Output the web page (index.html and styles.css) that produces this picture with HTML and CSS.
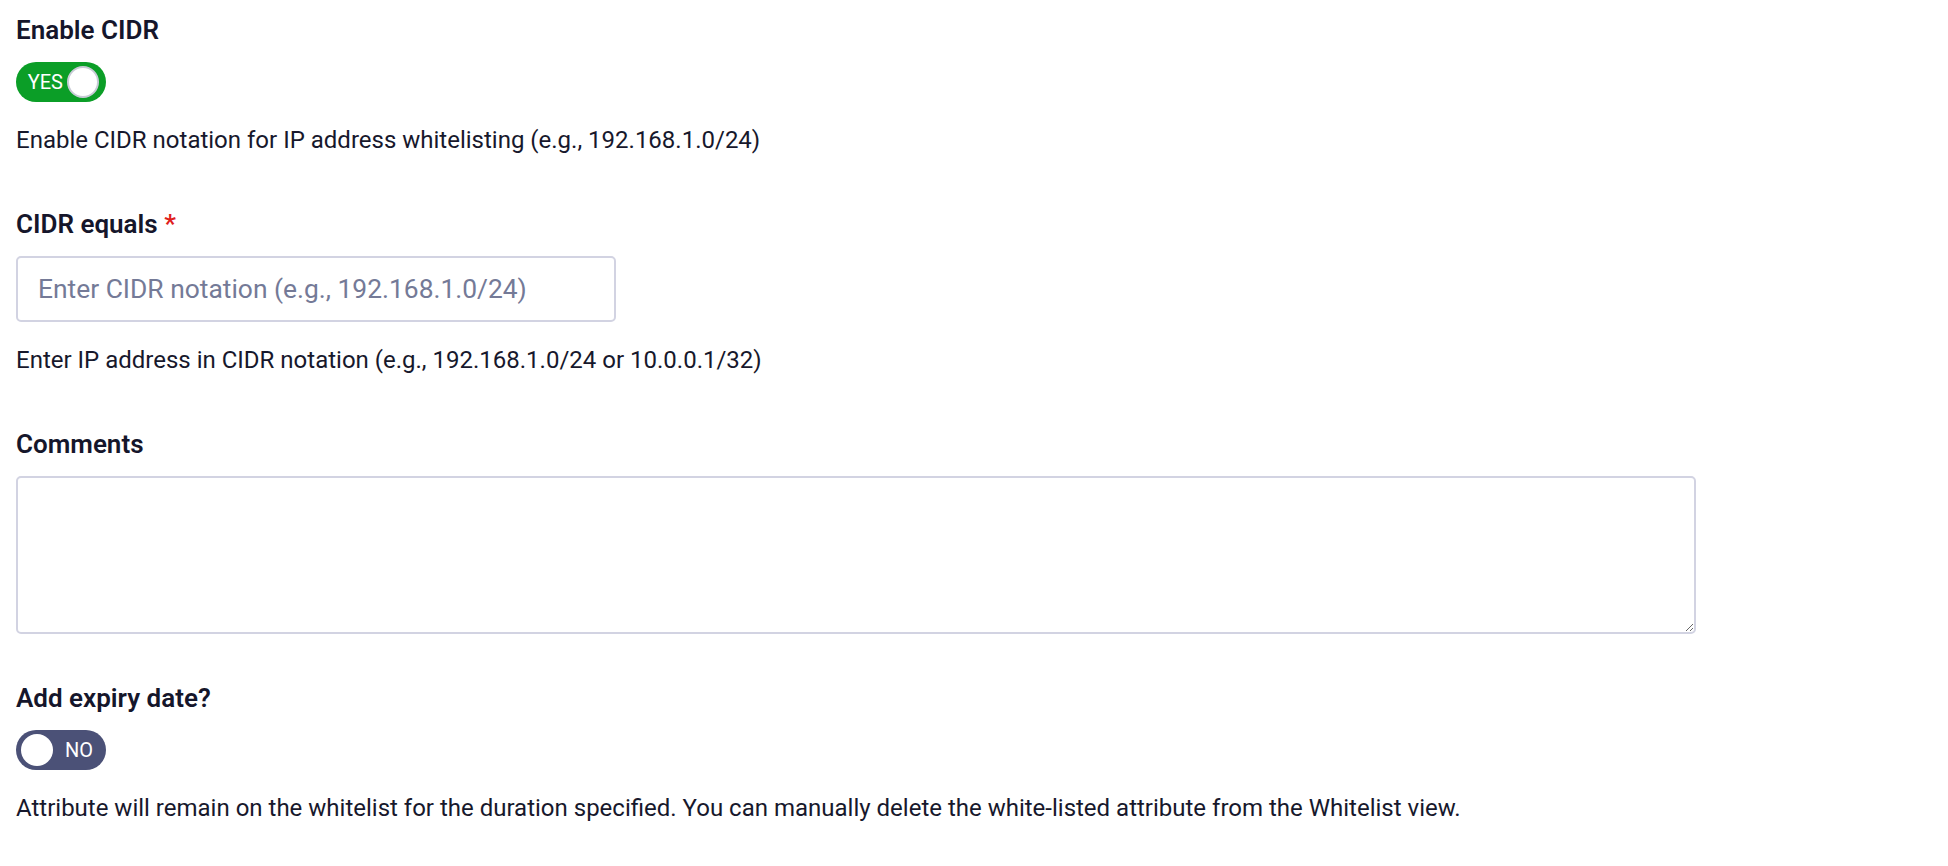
FILE: index.html
```html
<!DOCTYPE html>
<html lang="en">
<head>
<meta charset="utf-8">
<title>Whitelist attribute</title>
<link rel="stylesheet" href="styles.css">
</head>
<body>
<form class="form">
  <div class="field">
    <label class="field-label">Enable CIDR</label>
    <div class="toggle toggle-on"><span class="toggle-text">YES</span><span class="toggle-knob"></span></div>
    <p class="field-help">Enable CIDR notation for IP address whitelisting (e.g., 192.168.1.0/24)</p>
  </div>
  <div class="field">
    <label class="field-label">CIDR equals <span class="required">*</span></label>
    <input class="text-input" type="text" placeholder="Enter CIDR notation (e.g., 192.168.1.0/24)">
    <p class="field-help">Enter IP address in CIDR notation (e.g., 192.168.1.0/24 or 10.0.0.1/32)</p>
  </div>
  <div class="field field-nohelp">
    <label class="field-label">Comments</label>
    <textarea class="text-area"></textarea>
  </div>
  <div class="field">
    <label class="field-label">Add expiry date?</label>
    <div class="toggle toggle-off"><span class="toggle-knob"></span><span class="toggle-text">NO</span></div>
    <p class="field-help">Attribute will remain on the whitelist for the duration specified. You can manually delete the white-listed attribute from the Whitelist view.</p>
  </div>
</form>
</body>
</html>
```

FILE: styles.css
```css
html, body {
  margin: 0;
  padding: 0;
  background: #ffffff;
}
body {
  font-family: Roboto, "Liberation Sans", Arial, sans-serif;
  color: #15162b;
}
.form {
  display: flex;
  flex-direction: column;
  padding: 15px 16px 0 16px;
}
.field {
  display: flex;
  flex-direction: column;
  align-items: flex-start;
  margin-bottom: 54px;
}
.field-nohelp {
  margin-bottom: 49px;
}
.field-label {
  font-size: 26px;
  line-height: 30px;
  font-weight: 600;
  color: #15162b;
  margin-bottom: 17px;
}
.required {
  color: #e0201c;
}
.field-help {
  margin: 23px 0 0 0;
  font-size: 24px;
  line-height: 30px;
  color: #17182c;
}
.toggle {
  width: 90px;
  height: 40px;
  border-radius: 20px;
  display: flex;
  align-items: center;
  box-sizing: border-box;
}
.toggle-on {
  background: #0b9e27;
  justify-content: flex-end;
  gap: 4px;
  padding: 0 7px 0 0;
}
.toggle-off {
  background: #4b5177;
  justify-content: flex-start;
  gap: 12px;
  padding: 0 0 0 5px;
}
.toggle-knob {
  width: 32px;
  height: 32px;
  border-radius: 50%;
  background: #ffffff;
  box-sizing: border-box;
  flex: none;
}
.toggle-on .toggle-knob {
  border: 2px solid #c8cbd6;
}
.toggle-text {
  color: #ffffff;
  font-size: 20px;
  line-height: 24px;
  font-weight: 400;
}
.text-input {
  width: 600px;
  height: 66px;
  box-sizing: border-box;
  border: 2px solid #d2d3e2;
  border-radius: 5px;
  padding: 0 20px;
  font-family: Roboto, "Liberation Sans", Arial, sans-serif;
  font-size: 26.4px;
  color: #15162b;
  outline: none;
  margin: 0;
}
.text-input::placeholder {
  color: #747a97;
}
.text-area {
  width: 1680px;
  height: 158px;
  box-sizing: border-box;
  border: 2px solid #d2d3e2;
  border-radius: 5px;
  padding: 12px 20px;
  font-family: Roboto, "Liberation Sans", Arial, sans-serif;
  font-size: 24px;
  outline: none;
  resize: vertical;
  margin: 0;
  display: block;
}
```
